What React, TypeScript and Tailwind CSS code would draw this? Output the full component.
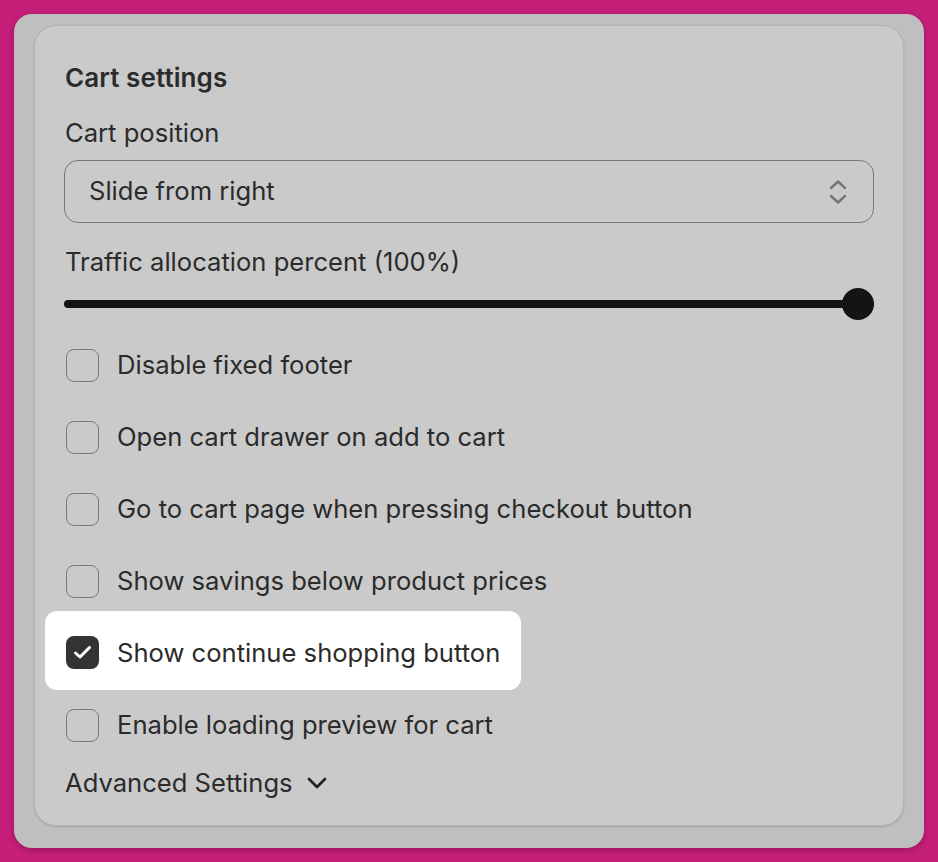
import React from 'react';

const options = [
  'Disable fixed footer',
  'Open cart drawer on add to cart',
  'Go to cart page when pressing checkout button',
  'Show savings below product prices',
  'Show continue shopping button',
  'Enable loading preview for cart',
];

function Box({ checked }: { checked?: boolean }) {
  if (checked) {
    return (
      <div className="w-[33px] h-[33px] rounded-[8px] bg-[#333333] flex items-center justify-center shrink-0">
        <svg width="19" height="15" viewBox="0 0 19 15" fill="none">
          <path d="M2.5 8 L7 12 L16.5 2.5" stroke="#ffffff" strokeWidth="3" strokeLinecap="round" strokeLinejoin="round" />
        </svg>
      </div>
    );
  }
  return <div className="w-[33px] h-[33px] rounded-[8px] border border-[#7a7a7a] shrink-0" />;
}

export default function App() {
  return (
    <div
      className="min-h-[862px] w-[938px] bg-[#c51f7a] p-[14px] text-[#2b2b2b]"
      style={{ fontFamily: 'Inter, "Noto Sans", sans-serif' }}
    >
      <div className="w-[910px] h-[834px] rounded-[18px] bg-[#bfbfbf] pt-[11px] px-[20px] shadow-[0_2px_6px_rgba(0,0,0,0.25)]">
        <div className="h-[801px] rounded-[22px] bg-[#cacaca] border border-[#b4b4b4] px-[29px] pt-[35px] shadow-[0_1px_2px_rgba(0,0,0,0.15)]">
          <div className="h-[32px] flex items-center pl-px text-[26px] font-semibold tracking-[0.1px]">Cart settings</div>

          <div className="h-[32px] mt-[24px] flex items-center pl-px text-[25.6px]">Cart position</div>

          <div className="mt-[11px] h-[63px] rounded-[14px] border border-[#787878] flex items-center justify-between pl-[24px] pr-[26px]">
            <span className="text-[25.6px]">Slide from right</span>
            <svg width="18" height="26" viewBox="0 0 18 26" fill="none">
              <path d="M2 9 L9 2.5 L16 9" stroke="#767676" strokeWidth="2.4" strokeLinecap="round" strokeLinejoin="round" />
              <path d="M2 17 L9 23.5 L16 17" stroke="#767676" strokeWidth="2.4" strokeLinecap="round" strokeLinejoin="round" />
            </svg>
          </div>

          <div className="h-[32px] mt-[23px] flex items-center pl-px text-[25.6px]">Traffic allocation percent (100%)</div>

          <div className="mt-[10px] h-[32px] relative flex items-center">
            <div className="h-[8px] w-full rounded-full bg-[#141414]" />
            <div className="absolute right-0 top-0 w-[32px] h-[32px] rounded-full bg-[#141414]" />
          </div>

          <div className="mt-[9px] flex flex-col">
            {options.map((label, i) =>
              i === 4 ? (
                <div key={label} className="h-[72px] relative flex items-center pl-[2px]">
                  <div className="absolute left-[-19px] top-[-6px] w-[476px] h-[79px] rounded-[12px] bg-white" />
                  <div className="relative flex items-center gap-[18px]">
                    <Box checked />
                    <span className="text-[25.6px]">{label}</span>
                  </div>
                </div>
              ) : (
                <div key={label} className="h-[72px] flex items-center gap-[18px] pl-[2px]">
                  <Box />
                  <span className="text-[25.6px]">{label}</span>
                </div>
              )
            )}
          </div>

          <div className="h-[32px] mt-[6px] flex items-center gap-[14px] pl-px">
            <span className="text-[25.6px]">Advanced Settings</span>
            <svg width="20" height="12" viewBox="0 0 20 12" fill="none">
              <path d="M2 2 L10 10 L18 2" stroke="#222222" strokeWidth="2.6" strokeLinecap="round" strokeLinejoin="round" />
            </svg>
          </div>
        </div>
      </div>
    </div>
  );
}
